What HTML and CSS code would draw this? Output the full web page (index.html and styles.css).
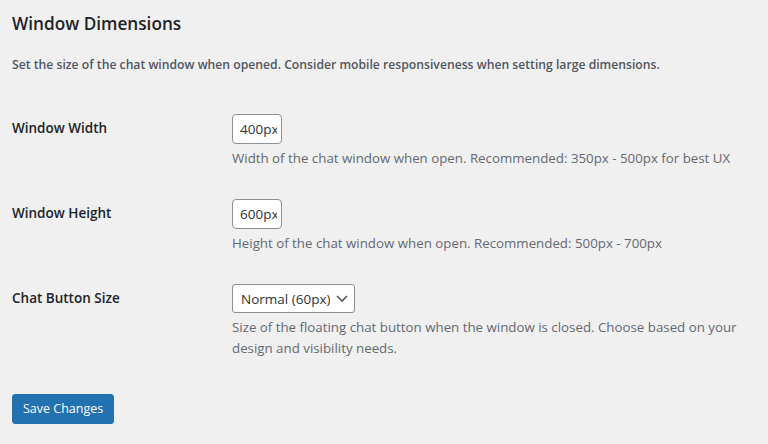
FILE: index.html
```html
<!DOCTYPE html>
<html lang="en">
<head>
<meta charset="utf-8">
<title>Window Dimensions</title>
<link rel="stylesheet" href="styles.css">
</head>
<body>
<div class="wrap">
  <h2 class="section-title">Window Dimensions</h2>
  <p class="section-desc">Set the size of the chat window when opened. Consider mobile responsiveness when setting large dimensions.</p>
  <table class="form-table">
    <tbody>
      <tr>
        <th scope="row"><label for="ww">Window Width</label></th>
        <td>
          <input id="ww" class="small-text" type="text" value="400px">
          <p class="description">Width of the chat window when open. Recommended: 350px - 500px for best UX</p>
        </td>
      </tr>
      <tr>
        <th scope="row"><label for="wh">Window Height</label></th>
        <td>
          <input id="wh" class="small-text" type="text" value="600px">
          <p class="description">Height of the chat window when open. Recommended: 500px - 700px</p>
        </td>
      </tr>
      <tr>
        <th scope="row"><label for="bs">Chat Button Size</label></th>
        <td>
          <div class="select-wrap">
            <select id="bs" class="select">
              <option>Normal (60px)</option>
            </select>
            <svg class="chev" width="16" height="16" viewBox="0 0 16 16" aria-hidden="true"><path d="M3 6 L8 11 L13 6" fill="none" stroke="#50575e" stroke-width="1.6"/></svg>
          </div>
          <p class="description">Size of the floating chat button when the window is closed. Choose based on your design and visibility needs.</p>
        </td>
      </tr>
    </tbody>
  </table>
  <p class="submit"><button type="button" class="button-primary">Save Changes</button></p>
</div>
</body>
</html>
```
FILE: styles.css
```css
html, body {
  margin: 0;
  padding: 0;
  background: #f0f0f1;
}
body {
  font-family: "Open Sans", "Noto Sans", sans-serif;
  color: #3c434a;
  font-size: 13px;
}
.wrap {
  padding: 0 12px;
}
.section-title {
  margin: 0;
  padding-top: 12px;
  font-size: 17.2px;
  font-weight: 600;
  line-height: 24px;
  color: #1d2327;
}
.section-desc {
  margin: 19px 0 0;
  font-size: 12.2px;
  font-weight: 600;
  line-height: 19px;
  color: #50575e;
}
.form-table {
  border-collapse: collapse;
  margin-top: 25px;
  width: 100%;
}
.form-table th {
  width: 200px;
  padding: 20px 10px 20px 0;
  text-align: left;
  vertical-align: top;
  font-size: 13.5px;
  font-weight: 600;
  line-height: 18px;
  color: #1d2327;
}
.form-table td {
  padding: 15px 10px;
  vertical-align: top;
  font-size: 13.3px;
  line-height: 21px;
}
.small-text {
  box-sizing: border-box;
  width: 50px;
  height: 30px;
  margin: 0;
  padding: 0 4px 0 7px;
  border: 1px solid #8c8f94;
  border-radius: 4px;
  background: #fff;
  font-family: inherit;
  font-size: 13.5px;
  color: #2c3338;
  display: block;
}
.select-wrap {
  position: relative;
  display: inline-block;
  vertical-align: top;
}
.select {
  appearance: none;
  -webkit-appearance: none;
  box-sizing: border-box;
  height: 29px;
  width: 123px;
  margin: 0;
  padding: 0 24px 0 8px;
  border: 1px solid #8c8f94;
  border-radius: 3px;
  background: #fff;
  font-family: inherit;
  font-size: 13.5px;
  color: #2c3338;
  display: block;
}
.chev {
  position: absolute;
  right: 5px;
  top: 6px;
  pointer-events: none;
}
.description {
  margin: 4px 0 0;
  color: #646970;
  font-size: 13.3px;
  line-height: 21px;
}
.submit {
  margin: 20px 0 0;
}
.button-primary {
  box-sizing: border-box;
  height: 30px;
  padding: 0 10px;
  border: 1px solid #2271b1;
  border-radius: 3px;
  background: #2271b1;
  color: #fff;
  font-family: inherit;
  font-size: 12.5px;
  line-height: 28px;
}
```
